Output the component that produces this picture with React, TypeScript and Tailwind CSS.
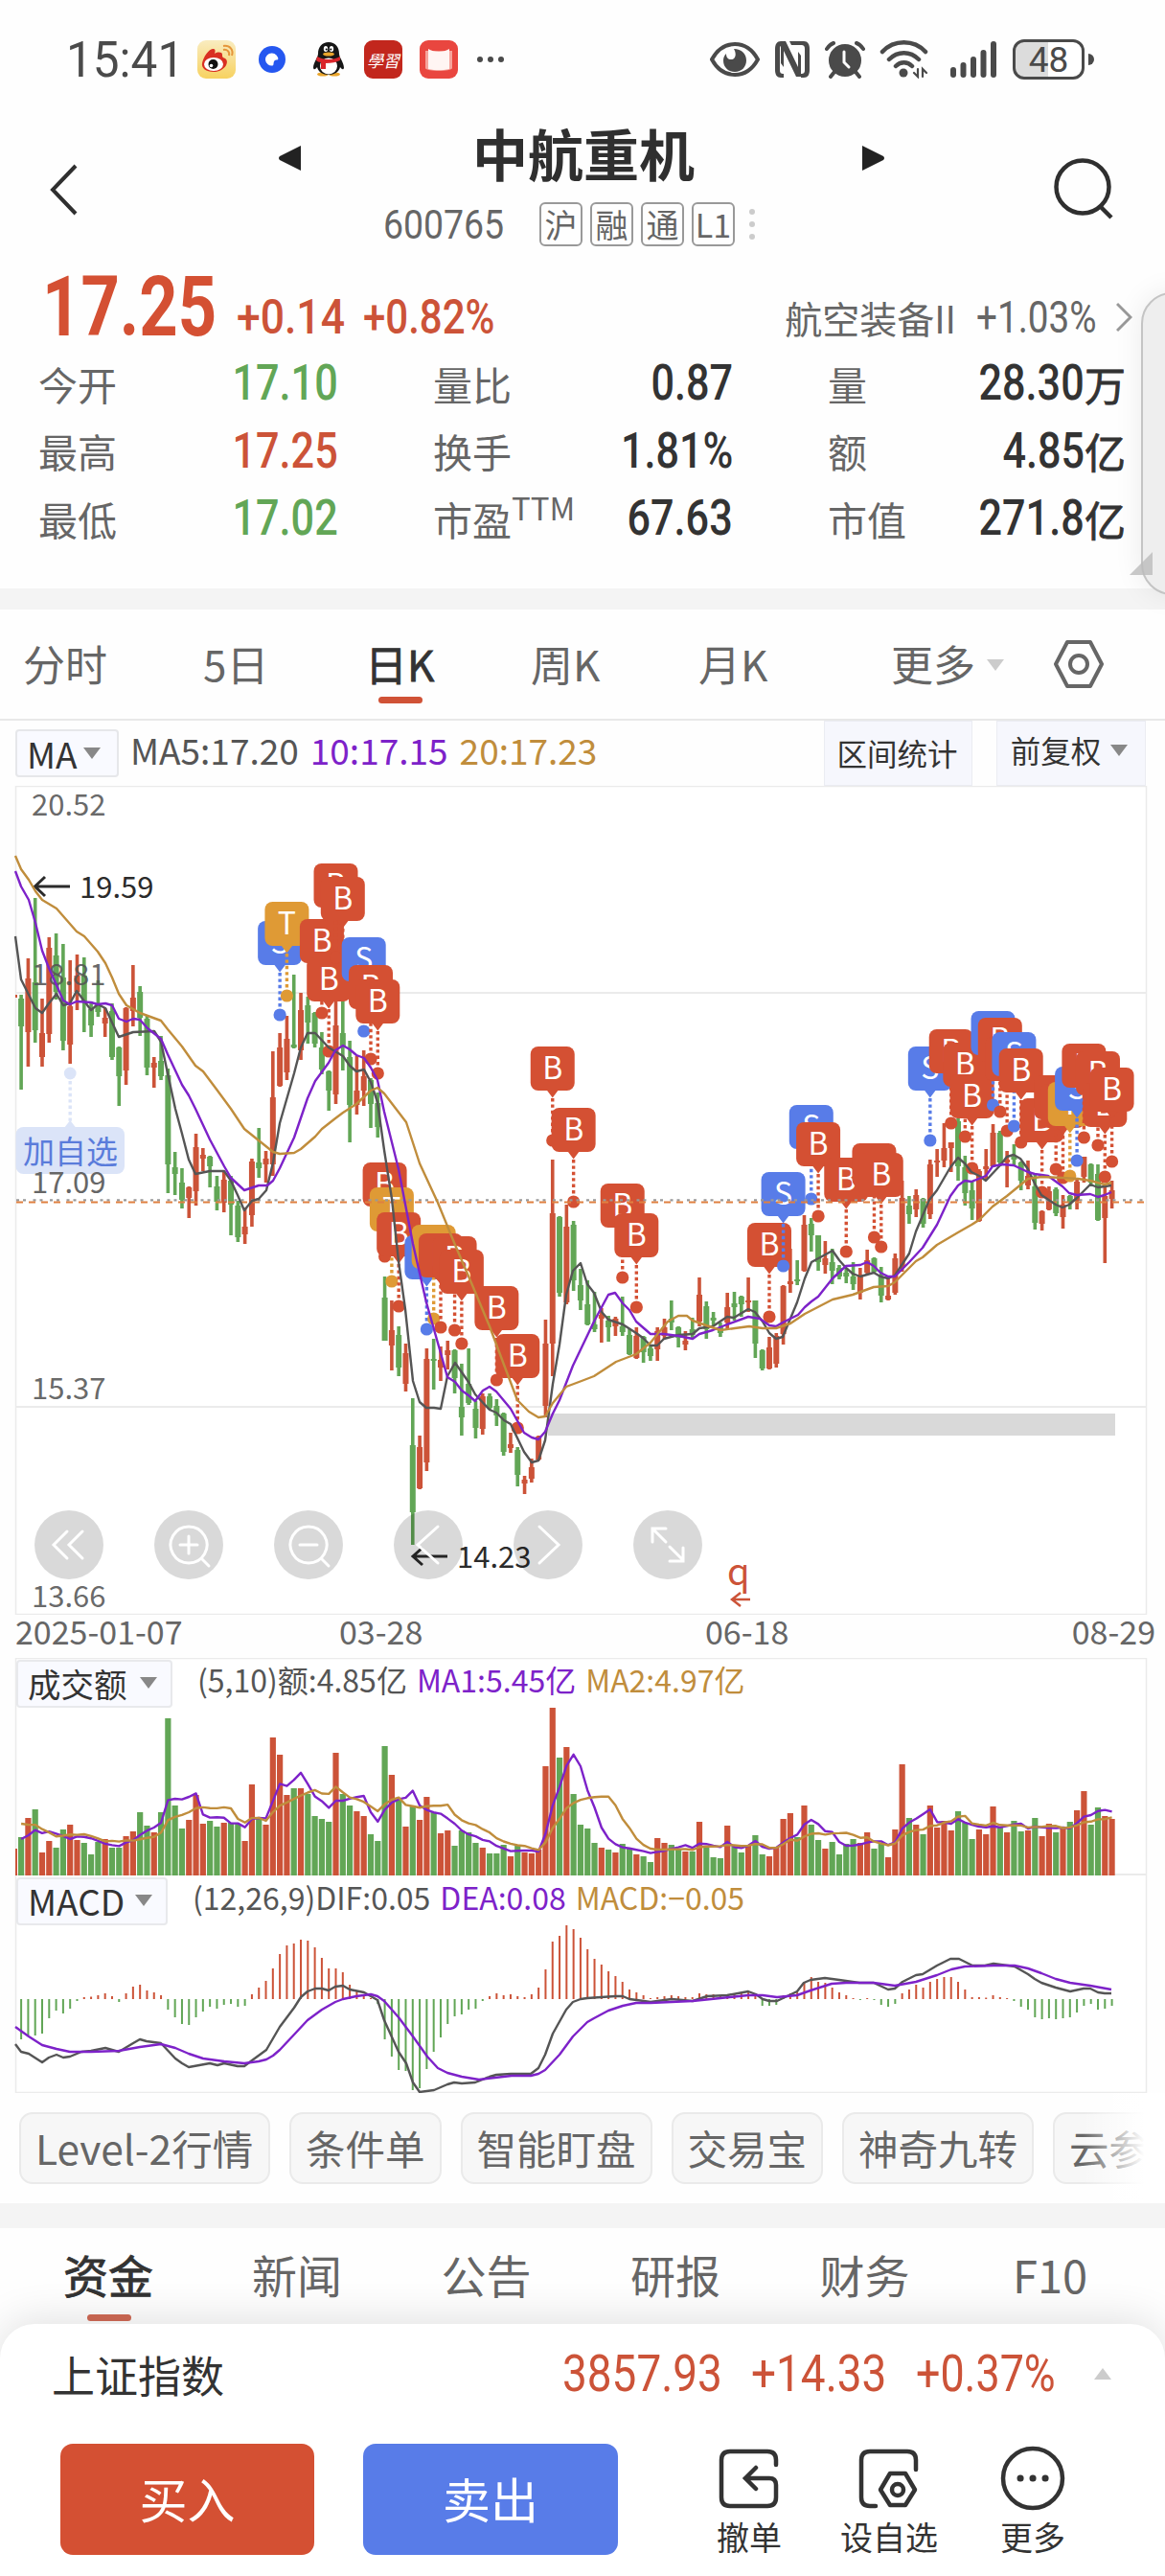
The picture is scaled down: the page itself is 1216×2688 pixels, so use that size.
import type { ReactNode } from 'react';

const RED = '#cc5338';
const GREEN = '#62a656';
const PURPLE = '#7d22c9';
const GOLD = '#c08d3c';
const DARK = '#555555';

const STEP = 7.298;
const FIRST_X = 22.1;
const candleX = (i: number) => FIRST_X + i * STEP;

// direction, high, body top, body bottom, low
const CANDLES = `g218,222,251,317 r180,201,257,293 g117,205,255,268 r222,258,283,293 r158,169,259,268 g154,177,215,223
g165,200,266,276 r182,230,270,290 r176,198,215,234 g179,198,225,257 g225,233,250,262 g203,227,236,241 r232,242,248,262
g227,235,283,286 g272,273,303,334 r231,232,297,312 r187,221,235,251 g209,215,242,261 g240,243,294,302 r283,289,294,315
g261,287,303,307 g295,302,395,425 g382,398,405,427 g399,414,432,441 r418,419,430,451 r363,377,423,438 r378,385,389,402
g386,387,397,419 g407,418,434,443 r403,411,435,445 g407,412,437,469 g433,438,471,476 r440,460,468,478 r389,392,448,460
g357,393,399,409 r381,389,395,414 r277,325,395,407 r258,273,313,314 r240,264,299,307 g197,270,273,274 r216,234,276,286
g220,229,247,269 g236,237,269,273 g257,273,296,301 g297,298,318,339 r223,250,322,332 g213,258,273,297 g266,283,333,372
r282,318,333,343 r276,303,318,334 g305,307,332,357 g320,331,356,367 g512,534,579,579 r537,568,584,610 g564,573,607,616
r582,592,624,632 g639,688,758,792 r678,690,733,734 r587,598,706,715 g577,598,600,630 r585,599,607,621 r579,589,594,609
g588,589,618,634 g603,648,659,678 g587,624,644,646 g642,650,670,681 r634,637,671,677 g634,637,649,651 g640,647,657,668
g654,655,695,699 r675,687,691,696 g690,693,719,731 r720,724,728,739 r702,711,723,727 r678,679,703,704 r557,582,647,659
r390,446,582,616 g449,450,529,533 r437,460,539,541 g454,458,516,527 g504,521,537,547 g516,541,562,563 g528,562,567,570
r545,552,556,581 g553,558,565,580 r554,556,564,574 g533,564,570,574 g567,573,593,594 r565,574,597,598 g574,575,591,602
g584,587,595,600 r565,569,588,600 r556,565,574,577 g537,556,560,568 g564,565,576,586 r569,579,583,589 g555,567,573,577
r513,531,559,564 g538,543,567,577 g549,555,558,564 g560,565,571,575 r529,544,560,566 g528,540,544,558 g532,533,541,554
r513,537,539,549 g537,537,582,597 g588,589,608,610 r575,586,608,609 r571,574,603,607 r521,522,572,583 r483,517,520,529
g495,515,517,521 r448,458,506,507 g451,457,469,486 g469,469,497,506 r475,493,500,509 g483,497,506,520 g500,503,512,515
g503,508,512,519 g497,512,520,526 r503,510,529,536 r484,495,508,510 g492,493,507,508 g502,512,532,539 r512,532,536,537
r488,493,529,531 r412,430,503,507 g428,438,447,457 r421,427,442,450 g430,431,457,461 r390,395,447,452 r379,391,393,408
r352,378,391,398 r372,372,378,403 g347,350,397,412 g386,398,425,438 g412,422,441,453 r400,402,454,455 r379,397,400,410
r353,362,397,398 g360,362,393,397 r381,390,393,419 g374,387,390,397 g392,393,412,422 r391,407,417,421 g405,418,456,463
r443,444,457,464 r418,423,442,443 g419,421,446,449 r427,437,450,462 g427,428,435,442 r410,413,433,442 r387,387,408,414
g394,395,414,418 g395,405,453,454 r417,428,451,498 r412,422,431,441`
  .split(/\s+/)
  .map((entry) => {
    const [high, top, bottom, low] = entry.slice(1).split(',').map(Number);
    return { color: entry[0] === 'r' ? RED : GREEN, high, top, bottom, low };
  });

const MA5 =
  '16,157 22,202 30,218 37,232 44,237 51,227 59,217 66,229 73,227 80,214 95,234 102,228 110,232 124,262 139,257 161,256 168,267 175,300 183,337 190,363 197,390 204,405 219,402 234,402 241,412 248,427 255,443 263,433 270,431 278,422 285,393 292,352 307,300 314,273 321,258 329,258 343,273 358,282 365,292 372,298 380,296 387,309 394,330 401,380 409,431 416,496 423,546 431,621 438,643 445,649 453,649 460,650 467,616 475,602 489,622 496,635 511,651 518,654 526,662 533,666 547,695 555,706 562,704 569,683 577,624 584,583 591,531 598,506 606,498 613,520 620,529 628,549 635,557 650,562 664,571 671,576 679,584 686,584 693,577 708,573 723,572 730,566 744,564 759,554 766,555 781,546 788,549 796,559 803,571 810,577 817,575 832,539 840,514 847,497 869,485 876,495 883,503 890,509 898,512 912,508 919,512 927,514 934,511 949,488 956,465 970,432 978,422 992,398 1000,388 1007,394 1014,403 1022,407 1029,412 1043,397 1051,387 1058,385 1065,389 1073,400 1080,415 1087,427 1102,437 1109,440 1116,437 1124,430 1138,416 1146,419 1160,417';
const MA10 =
  '16,89 22,105 30,119 37,143 44,172 51,190 59,208 66,224 73,228 80,225 95,226 102,228 110,227 117,229 124,243 132,246 139,243 146,244 154,253 168,264 175,280 190,312 197,323 204,337 219,369 234,397 241,409 255,422 270,417 279,417 285,412 292,399 307,367 321,326 329,308 343,289 350,276 358,271 365,275 372,281 380,284 387,294 394,307 401,340 416,400 431,478 445,539 460,592 467,617 475,622 482,631 489,636 496,642 504,631 511,627 518,632 533,650 547,675 555,680 562,682 569,674 577,655 584,641 598,605 620,559 628,544 635,531 642,529 650,540 657,547 664,559 679,572 693,572 708,574 723,577 730,572 744,568 759,562 781,554 793,556 803,563 810,564 817,560 833,552 840,544 847,538 854,533 869,514 883,501 898,500 905,497 912,501 919,508 927,512 934,512 949,497 963,482 978,458 985,443 992,428 1000,417 1007,412 1014,413 1029,407 1036,397 1046,395 1058,396 1073,403 1080,405 1094,407 1109,418 1116,425 1124,427 1138,426 1146,429 1153,427 1160,424';
const MA20 =
  '16,73 22,87 30,98 37,110 44,119 59,128 80,152 88,157 102,173 110,185 117,200 124,217 132,229 146,237 168,245 175,254 190,272 204,292 212,298 227,318 241,337 255,358 270,370 285,382 292,384 307,383 314,379 329,366 336,358 350,347 358,341 372,332 387,318 394,315 401,321 424,351 438,394 457,435 475,479 493,521 511,564 526,604 540,641 552,653 562,659 569,658 577,644 591,627 607,621 620,616 643,601 664,593 679,581 697,559 708,553 717,553 723,558 737,563 752,568 767,566 782,564 796,566 810,566 825,561 840,551 869,536 890,531 912,523 927,522 934,518 956,496 963,492 978,479 1000,466 1014,458 1022,453 1036,439 1051,428 1073,410 1087,408 1109,409 1125,410 1138,412 1153,416 1160,414';

type MarkerKind = 'B' | 'S' | 'T';
const MARKER_COLORS: Record<MarkerKind, string> = { B: '#d45033', S: '#587ce8', T: '#df9a35' };

const MARKERS: [MarkerKind, number, number][] = [
  ['S', 37, 141], ['T', 38, 121], ['B', 43, 139], ['B', 44, 179], ['B', 45, 81], ['B', 46, 95],
  ['S', 49, 158], ['B', 50, 187], ['B', 51, 202], ['B', 52, 393], ['T', 53, 419], ['B', 54, 445],
  ['S', 58, 469], ['T', 59, 458], ['B', 60, 467], ['B', 62, 470], ['B', 63, 484], ['B', 68, 522],
  ['B', 71, 572], ['B', 76, 272], ['B', 79, 336], ['B', 86, 415], ['B', 88, 446], ['B', 107, 456],
  ['S', 109, 403], ['S', 113, 333], ['B', 114, 351], ['B', 118, 388], ['B', 122, 373], ['B', 123, 383],
  ['S', 130, 272], ['B', 133, 254], ['B', 135, 268], ['B', 136, 301], ['S', 139, 235], ['B', 140, 242],
  ['B', 141, 262], ['S', 142, 257], ['B', 143, 274], ['B', 146, 326], ['B', 148, 302], ['B', 149, 311],
  ['T', 150, 309], ['S', 151, 293], ['B', 152, 269], ['B', 154, 277], ['B', 155, 310], ['B', 156, 294],
];

const VOLUMES = [
  40, 60, 69, 24, 36, 29, 48, 53, 37, 34, 22, 35, 38, 29, 29, 41, 46, 66, 52, 45, 66, 164, 73, 49, 58, 84, 54, 57, 51,
  55, 55, 54, 36, 95, 60, 53, 144, 126, 84, 91, 91, 85, 62, 59, 56, 128, 85, 73, 67, 62, 43, 36, 135, 105, 79, 51, 72,
  58, 82, 66, 44, 47, 31, 47, 45, 34, 29, 23, 23, 32, 20, 31, 24, 23, 27, 114, 175, 123, 134, 85, 53, 49, 34, 29, 27,
  24, 33, 28, 22, 20, 14, 39, 34, 32, 28, 25, 25, 56, 30, 19, 18, 52, 30, 24, 32, 42, 22, 20, 29, 59, 65, 40, 73, 53,
  37, 28, 35, 22, 33, 38, 34, 45, 28, 33, 19, 48, 116, 60, 53, 43, 73, 50, 57, 47, 67, 55, 38, 48, 43, 72, 50, 45, 57,
  46, 47, 60, 41, 54, 45, 50, 56, 68, 88, 53, 71, 62, 59,
];
// sessions before the visible window, only needed for the averages
const EARLIER_VOLUMES = [70, 70, 70, 70, 70, 41, 41, 40, 28];

const HISTOGRAM = [
  -42, -38, -38, -36, -20, -12, -15, -10, -2, 2, 2.5, 4, 6, 3, -3, 6, 13, 15, 9, 7, 4, -11, -19, -26, -27, -19, -13, -8,
  -10, -6, -5, -8, -7, 5, 12, 19, 32, 47, 56, 58, 62, 61, 54, 43, 32, 32, 28, 15, 8, 5, 1, -5, -42, -60, -74, -75, -95,
  -93, -73, -55, -40, -26, -18, -16, -11, -10, -2, 3, 6, 4, 5, 3, 2, 5, 12, 31, 60, 66, 77, 73, 64, 52, 42, 36, 29, 24,
  18, 10, 7, 4, 1, 2, 3, 4, 3, 2, 2, 6, 5, 5, 4, 4, 5, 6, 7, 3, -7, -7, -6, 4, 6, 7, 18, 23, 18, 17, 12, 7, 4, 1, -1, 1,
  -1, -6, -8, -5, 6, 10, 15, 12, 18, 21, 23, 23, 18, 10, 2, 2, 1.5, 4, 2, 1, -2, -8, -11, -19, -21, -20, -21, -20, -19,
  -14, -7, -5, -11, -10, -7,
];

const DIF =
  '16,176 22,184 30,186 44,195 51,190 59,187 66,190 73,189 85,184 95,183 110,180 124,184 139,175 146,171 153,173 168,175 183,191 190,196 197,200 219,196 227,198 234,196 248,199 255,199 263,193 278,182 292,158 307,138 314,127 321,121 329,118 336,118 343,120 350,116 358,115 365,119 380,122 394,130 401,151 416,184 424,196 431,216 438,226 453,224 467,218 474,216 482,217 496,216 511,210 518,208 533,207 554,207 562,201 569,187 577,165 591,140 598,132 606,129 613,128 642,126 650,126 657,129 672,131 679,132 701,129 723,131 738,126 759,125 781,121 789,124 796,129 803,131 811,131 832,121 839,112 846,109 861,107 876,109 897,112 912,112 927,119 934,118 942,111 956,104 963,103 978,94 992,87 1001,87 1007,90 1015,94 1028,94 1037,92 1052,94 1059,95 1073,103 1080,108 1087,112 1102,117 1117,121 1131,118 1138,118 1146,122 1153,123 1160,123';
const DEA =
  '16,158 30,168 44,177 59,181 73,184 95,184 124,183 146,179 168,176 183,180 197,186 212,191 234,194 255,196 270,194 278,192 285,188 292,182 307,166 321,151 336,140 350,132 358,129 372,126 387,124 394,126 401,131 416,148 431,168 446,189 457,201 467,206 482,210 500,213 534,209 554,209 562,207 569,203 584,187 598,168 613,153 620,149 635,141 650,136 664,133 679,133 723,131 752,128 781,125 796,125 811,127 832,125 846,120 868,113 883,112 912,112 934,115 956,111 978,104 993,98 1007,95 1037,94 1059,94 1073,97 1087,102 1102,108 1117,112 1138,115 1160,119';

function average(period: number) {
  const all = [...EARLIER_VOLUMES, ...VOLUMES];
  return VOLUMES.map((_, i) => {
    const end = i + EARLIER_VOLUMES.length + 1;
    const sum = all.slice(end - period, end).reduce((a, b) => a + b, 0);
    return `${candleX(i)},${227 - sum / period}`;
  }).join(' ');
}

function Line({ points, color }: { points: string; color: string }) {
  return <polyline points={points} fill="none" stroke={color} strokeWidth="2.4" strokeLinejoin="round" />;
}

function Marker({ kind, index, top }: { kind: MarkerKind; index: number; top: number }) {
  const x = candleX(index);
  const color = MARKER_COLORS[kind];
  return (
    <g fill={color}>
      <line x1={x} x2={x} y1={top + 54} y2={top + 92} stroke={color} strokeWidth="3.4" strokeDasharray="3.4 3" />
      <circle cx={x} cy={top + 98} r="6.6" />
      <rect x={x - 23} y={top} width="46" height="46" rx="8" />
      <path d={`M${x - 6} ${top + 45.5}h12l-6 8z`} />
      <text x={x} y={top + 34} textAnchor="middle" fontSize="32" fill="#fff">
        {kind}
      </text>
    </g>
  );
}

function PriceChart() {
  return (
    <svg width="1216" height="865" className="block">
      <rect x="16.5" y="0.5" width="1180" height="864" fill="#fff" stroke="#ebebeb" strokeWidth="1.5" />
      <path d="M17 216h1179M17 648h1179" stroke="#ebebeb" strokeWidth="2" />
      <rect x="16" y="218" width="2" height="3" fill={RED} />
      {CANDLES.map((c, i) => (
        <g key={i} fill={c.color}>
          <rect x={candleX(i) - 1.8} y={c.high} width="3.6" height={c.low - c.high} />
          <rect x={candleX(i) - 3} y={c.top} width="6" height={Math.max(c.bottom - c.top, 2)} />
        </g>
      ))}
      <rect x="572" y="655" width="592" height="23" fill="#d9d9d9" />
      <g fontSize="31" fill="#555" fillOpacity="0.9">
        <text x="33" y="31">20.52</text>
        <text x="33" y="208">18.81</text>
        <text x="33" y="640">15.37</text>
        <text x="33" y="857">13.66</text>
      </g>

      {/* Watchlist flag */}
      <circle cx="73.2" cy="300" r="6.4" fill="#dbe4f8" />
      <path d="M73.2 308v42" stroke="#dbe4f8" strokeWidth="3.4" strokeDasharray="3.4 3" />
      <path d="M67 357l6.2-8 6.2 8z" fill="#dbe4f8" />
      <rect x="16.5" y="356" width="113.5" height="49" rx="8" fill="#dbe4f8" />
      <text x="24" y="394" fontSize="33" fill="#5a7cdb">加自选</text>
      <text x="33" y="425" fontSize="31" fill="#666">17.09</text>

      <g fill="none" stroke="#2b2b2b" strokeWidth="3">
        <path d="M73 105H37M47 95l-10.500 10 10.500 10" />
        <path d="M467 804h-36M441 795l-10 9 10 9" />
      </g>
      <g fontSize="31" fill="#2b2b2b">
        <text x="83" y="117">19.59</text>
        <text x="477" y="816">14.23</text>
      </g>

      {MARKERS.map(([kind, index, top]) => (
        <Marker key={index} kind={kind} index={index} top={top} />
      ))}

      <path d="M17 432.400h1179" stroke="#999" strokeWidth="2.400" strokeDasharray="3 4 3 7.500" />
      <path d="M17 434.400h1179" stroke="#e08040" strokeWidth="2" strokeDasharray="7 6" />
      <Line points={MA5} color={DARK} />
      <Line points={MA10} color={PURPLE} />
      <Line points={MA20} color={GOLD} />

      <text x="759" y="834" fontSize="38" fill={RED}>q</text>
      <path d="M783 849h-18M773 842l-9 7 9 7" fill="none" stroke={RED} strokeWidth="2.500" />
    </svg>
  );
}

function VolumeChart() {
  return (
    <svg width="1216" height="227" className="block">
      <path d="M16.500 227V0.500H1196.500V227" fill="#fff" stroke="#ebebeb" strokeWidth="1.5" />
      <path d="M17 226h1179" stroke="#ebebeb" strokeWidth="2" />
      <rect x="16" y="199" width="2" height="28" fill={RED} />
      {VOLUMES.map((v, i) => (
        <rect key={i} x={candleX(i) - 3.1} y={227 - v} width="6.2" height={v} fill={CANDLES[i].color} />
      ))}
      <Line points={average(5)} color={PURPLE} />
      <Line points={average(10)} color={GOLD} />
    </svg>
  );
}

function MacdChart() {
  return (
    <svg width="1216" height="227" className="block">
      <path d="M16.500 0V226.500H1196.500V0" fill="#fff" stroke="#ebebeb" strokeWidth="1.5" />
      {HISTOGRAM.map((v, i) => (
        <rect
          key={i}
          x={candleX(i) - 1}
          y={v > 0 ? 129 - v : 129}
          width="2"
          height={Math.abs(v)}
          fill={v > 0 ? RED : GREEN}
        />
      ))}
      <Line points={DIF} color={DARK} />
      <Line points={DEA} color={PURPLE} />
    </svg>
  );
}

function Caret({ className, up }: { className: string; up?: boolean }) {
  return (
    <svg viewBox="0 0 18 12" className={`h-3 w-[18px] shrink-0 fill-current ${className}`}>
      <path d={up ? 'M0 12h18L9 0z' : 'M0 0h18L9 12z'} />
    </svg>
  );
}

function StatusBar() {
  return (
    <div className="flex h-[120px] items-center pb-px pl-[69px] pr-[74px] pt-[5px] text-[#4a4a4a]">
      <div className="w-[137px] font-[Roboto] text-[51px] leading-none whitespace-nowrap">
        <span className="inline-block origin-left scale-x-[.97]">15:41</span>
      </div>
      <svg width="40" height="40" viewBox="0 0 40 40">
        <defs>
          <linearGradient id="weibo" x2="0" y2="1">
            <stop stopColor="#f9ecc0" />
            <stop offset="1" stopColor="#f7d260" />
          </linearGradient>
        </defs>
        <rect width="40" height="40" rx="9" fill="url(#weibo)" />
        <path d="M16 9c3 0 3 2 2 5 3-2 8-2 8 1 0 2 0 3 3 4 5 3 0 14-12 14C9 33 4 29 5 24 6 18 12 9 16 9z" fill="#d92f22" />
        <ellipse cx="17" cy="25" rx="10" ry="7" fill="#fff" />
        <circle cx="16.500" cy="25" r="5" fill="#111" />
        <circle cx="14.500" cy="26.500" r="1.800" fill="#fff" />
        <path d="M27 10c4-1 7 2 6 6M27 6c7-1 11 4 9 10" fill="none" stroke="#e5963a" strokeWidth="2" />
      </svg>
      <svg width="28" height="28" viewBox="0 0 28 28" className="ml-6">
        <circle cx="14" cy="14" r="14" fill="#2557f0" />
        <path d="M14 7.500a6.500 6.500 0 1 0 1 12.800c1-1 0-4 2-5.300 1.500-.8 3-.5 3.300-1A6.500 6.500 0 0 0 14 7.500z" fill="#fff" />
      </svg>
      <svg width="32" height="36" viewBox="0 0 32 36" className="ml-[29px]">
        <ellipse cx="10" cy="33.500" rx="6" ry="2" fill="#e9a52c" />
        <ellipse cx="22" cy="33.500" rx="6" ry="2" fill="#e9a52c" />
        <path d="M16 0c7 0 11 5 11 12 0 4 5 9 5 15-1 3-3 0-4-1-1 5-6 8-12 8S5 31 4 26c-1 1-3 4-4 1 0-6 5-11 5-15C5 5 9 0 16 0z" fill="#161616" />
        <ellipse cx="16" cy="25" rx="9" ry="8.500" fill="#fff" />
        <ellipse cx="13" cy="7" rx="2.200" ry="3" fill="#fff" />
        <ellipse cx="19" cy="7" rx="2.200" ry="3" fill="#fff" />
        <circle cx="13.700" cy="7.500" r="1" />
        <circle cx="18.300" cy="7.500" r="1" />
        <ellipse cx="16" cy="12.500" rx="6" ry="2" fill="#e9a52c" />
        <path d="M4 15c7 4 17 4 24 0v4c-4 2-9 3-15 3v6H8v-7c-2 0-4-1-5-2z" fill="#d9252b" />
      </svg>
      <div className="ml-[21px] flex h-10 w-10 items-center justify-center rounded-[9px] bg-[#c2271d] text-[17px] leading-none text-white italic">
        學習
      </div>
      <svg width="40" height="40" viewBox="0 0 40 40" className="ml-[18px]">
        <rect width="40" height="40" rx="9" fill="#e9463f" />
        <path d="M6 11h28v18c0 2-8 3-14 3S6 31 6 29z" fill="#f6a49c" />
        <path d="M9 9c3 2 7 3 11 3s8-1 11-3v21c-4 1-8 1-11 1s-7 0-11-1z" fill="#fff5f3" />
      </svg>
      <div className="ml-[20px] flex gap-[5px]">
        <i className="h-1.5 w-1.5 rounded-full bg-current" />
        <i className="h-1.5 w-1.5 rounded-full bg-current" />
        <i className="h-1.5 w-1.5 rounded-full bg-current" />
      </div>

      <div className="ml-auto flex items-center">
        <svg width="52" height="38" viewBox="0 0 52 38" className="fill-none stroke-current" strokeWidth="4">
          <path d="M2 19C8 8 16 3 26 3s18 5 24 16C44 30 36 35 26 35S8 30 2 19z" />
          <path d="M25 8c8 0 13 5 13 12s-5 12-12 12-12-5-12-12c0-3 1-5 3-7 0 4 2 6 5 6 5 0 6-6 3-11z" className="fill-current stroke-none" />
        </svg>
        {/* NFC */}
        <svg width="36" height="38" viewBox="0 0 36 38" className="ml-4 fill-current">
          <path d="M6 0h5l13 27V11l3 4v22h-5L9 10v17l-3-4z" />
          <path d="M6 0C2 0 0 3 0 8v22c0 5 2 8 6 8h3V34c-3 0-4-1-4-4V8c0-3 1-4 4-4z" />
          <path d="M15 0h15c4 0 6 3 6 8v22c0 5-2 8-6 8h-3v-4c3 0 4-1 4-4V8c0-3-1-4-4-4H17z" />
        </svg>
        <svg width="42" height="40" viewBox="0 0 42 40" className="ml-4 stroke-current" strokeWidth="4" strokeLinecap="round">
          <circle cx="21" cy="21" r="15" className="fill-current" />
          <path d="M2 9c2-3 4-5 7-6M40 9c-2-3-4-5-7-6M10 33l-4 5M32 33l4 5" fill="none" />
          <path d="M20 12v11l5 5" fill="none" stroke="#fff" strokeWidth="3" />
        </svg>
        <svg width="52" height="40" viewBox="0 0 52 40" className="ml-[15px] fill-none stroke-current" strokeWidth="4.500" strokeLinecap="round">
          <path d="M3 12C15-1 36-1 48 12M10 20c9-9 22-9 31 0M17 27c5-5 12-5 17 0" />
          <circle cx="25" cy="34" r="4.500" className="fill-current stroke-none" />
          <path d="M40 30v8l-4-4M45 38v-8l4 4" strokeWidth="2.200" />
        </svg>
        <svg width="50" height="40" viewBox="0 0 50 40" className="ml-[21px] stroke-current" strokeWidth="6" strokeLinecap="round">
          <path d="M4 31v5M14.500 26v10M25 20v16M35.500 13v23M46 4v32" />
        </svg>
        <div className="ml-4 flex h-[42px] w-[75px] items-center justify-center rounded-xl border-[3px] border-[#4a4a4a] bg-[linear-gradient(90deg,#dcdcdc_50%,#fff_50%)] font-[Roboto] text-[37px] leading-none">
          48
        </div>
        <i className="ml-1 h-3 w-1.5 rounded-r-full bg-current" />
      </div>
    </div>
  );
}

function StockHeader() {
  return (
    <header className="flex h-[155px] justify-between pl-[52px] pr-[54px] text-[#2f2f2f]">
      <svg width="30" height="54" viewBox="0 0 30 54" className="mt-[51px] fill-none stroke-current" strokeWidth="4">
        <path d="M27 2L3 27l24 25" />
      </svg>
      <div className="flex flex-col items-center pl-1.5">
        <div className="relative left-[13px] mt-2 flex items-center">
          <svg width="23" height="28" viewBox="0 0 23 28" className="mt-3">
            <path d="M23 1v26L1 16q-2-2 0-4z" fill="#222" />
          </svg>
          <h1 className="mr-[175px] ml-[179px] text-[58px] leading-[62px] font-bold">中航重机</h1>
          <svg width="23" height="28" viewBox="0 0 23 28" className="mt-3">
            <path d="M0 1v26l22-11q2-2 0-4z" fill="#222" />
          </svg>
        </div>
        <div className="mt-[21px] flex items-center text-[#666]">
          <div className="w-[163px] font-[Roboto] text-[43px] leading-none whitespace-nowrap">
            <span className="inline-block origin-left scale-x-[.87]">600765</span>
          </div>
          <div className="flex gap-2">
            {['沪', '融', '通', 'L1'].map((tag) => (
              <span
                key={tag}
                className="flex h-[46px] w-[45px] items-center justify-center rounded-md border-2 border-[#999] text-[34px] leading-none"
              >
                {tag}
              </span>
            ))}
          </div>
          <div className="ml-[15px] flex flex-col gap-[7px]">
            <i className="h-1.5 w-1.5 rounded-full bg-[#ccc]" />
            <i className="h-1.5 w-1.5 rounded-full bg-[#ccc]" />
            <i className="h-1.5 w-1.5 rounded-full bg-[#ccc]" />
          </div>
        </div>
      </div>
      <svg width="62" height="64" viewBox="0 0 62 64" className="mt-[45px] fill-none stroke-current" strokeWidth="4.500">
        <circle cx="30" cy="30" r="27.500" />
        <path d="M48 50l12 12" />
      </svg>
    </header>
  );
}

interface StatProps {
  label: ReactNode;
  value: string;
  unit?: string;
  className: string;
  color: string;
}

function Stat({ label, value, unit, className, color }: StatProps) {
  return (
    <div className={`flex items-center justify-between ${className}`}>
      <span className="text-[41px] leading-none whitespace-nowrap text-[#666]">{label}</span>
      <span className={`flex items-center font-[Roboto] text-[52px] leading-none font-medium ${color}`}>
        <span className="w-28 text-right">
          <span className="float-right inline-block origin-right scale-x-[.83]">{value}</span>
        </span>
        {unit && (
          <span className="font-['Noto_Sans_CJK_SC'] text-[43px] font-normal [-webkit-text-stroke:.8px]">{unit}</span>
        )}
      </span>
    </div>
  );
}

const STATS = [
  [
    { label: '今开', value: '17.10', color: 'text-[#62a656]' },
    { label: '量比', value: '0.87', color: 'text-[#333]' },
    { label: '量', value: '28.30', unit: '万', color: 'text-[#333]' },
  ],
  [
    { label: '最高', value: '17.25', color: 'text-[#cc5338]' },
    { label: '换手', value: '1.81%', color: 'text-[#333]' },
    { label: '额', value: '4.85', unit: '亿', color: 'text-[#333]' },
  ],
  [
    { label: '最低', value: '17.02', color: 'text-[#62a656]' },
    { label: '市盈', sup: 'TTM', value: '67.63', color: 'text-[#333]' },
    { label: '市值', value: '271.8', unit: '亿', color: 'text-[#333]' },
  ],
];
const STAT_WIDTHS = ['w-[313px]', 'ml-[99px] w-[313px]', 'ml-[99px] w-[311px]'];

function Quote() {
  return (
    <section className="relative h-[339px] pl-10">
      <div className="flex h-[90px] items-end pb-[9px] font-[Roboto] leading-none whitespace-nowrap text-[#cc5338]">
        <div className="-mb-2 w-[207px] pl-[4px] text-[87px] font-bold text-[#d45033]">
          <span className="inline-block origin-left scale-x-[.81]">17.25</span>
        </div>
        <div className="w-[132px] text-[50px] font-medium">
          <span className="inline-block origin-left scale-x-[.89]">+0.14</span>
        </div>
        <div className="w-[140px] text-[50px] font-medium">
          <span className="inline-block origin-left scale-x-[.84]">+0.82%</span>
        </div>
        <div className="mb-0.5 ml-auto flex items-center text-[#666]">
          <span className="font-['Noto_Sans_CJK_SC'] text-[39px]">航空装备II</span>
          <span className="ml-[21px] w-[126px] text-[46px]">
            <span className="inline-block origin-left scale-x-[.84]">+1.03%</span>
          </span>
          <svg width="17" height="32" viewBox="0 0 17 32" className="mr-[34px] ml-5 fill-none stroke-[#999]" strokeWidth="3">
            <path d="M1 2l14 14L1 30" />
          </svg>
        </div>
      </div>
      {STATS.map((row, r) => (
        <div key={r} className="flex h-[70.500px]">
          {row.map(({ label, sup, ...rest }: any, c) => (
            <Stat
              key={label}
              {...rest}
              className={STAT_WIDTHS[c]}
              label={
                sup ? (
                  <>
                    {label}
                    <span className="relative -top-4 text-[33px]">{sup}</span>
                  </>
                ) : (
                  label
                )
              }
            />
          ))}
        </div>
      ))}
      {/* Collapsed side drawer peeking in from the right */}
      <div className="absolute top-[30px] right-[-40px] h-[316px] w-[65px] rounded-[44px] border-2 border-[#c4c4c4] bg-[#eee] shadow-[0_0_30px_rgba(0,0,0,.08)]" />
      <svg width="37" height="30" viewBox="0 0 37 30" className="absolute top-[300px] right-0">
        <path d="M0 25L24 1v24z" fill="#bbb" fillOpacity="0.8" />
      </svg>
    </section>
  );
}

function PeriodTabs() {
  return (
    <nav className="flex h-[116px] border-b-2 border-[#e8e8e8] pl-6 pt-[34px] text-[44px] leading-[44px] text-[#666]">
      <span className="w-[188px]">分时</span>
      <span className="w-[169px]">5日</span>
      <span className="w-[173px] text-[#333] [-webkit-text-stroke:.8px]">
        日K
        <i className="mt-[13px] ml-3.5 block h-[7px] w-[46px] rounded-full bg-[#d05236]" />
      </span>
      <span className="w-[175px]">周K</span>
      <span className="w-[201px]">月K</span>
      <span>更多</span>
      <Caret className="mt-[18px] ml-3 text-[#ccc]" />
      <svg width="52" height="50" viewBox="0 0 52 50" className="-mt-0.5 ml-[52px] fill-none stroke-[#666]" strokeWidth="4">
        <path d="M14 2h24l12 23-12 23H14L2 25z" strokeLinejoin="round" />
        <circle cx="26" cy="25" r="9" />
      </svg>
    </nav>
  );
}

function IndicatorBar() {
  return (
    <div className="flex h-[68px] pl-4 text-[37px] leading-none">
      <div className="mt-[9px] flex h-[50px] w-[108px] items-center rounded border-2 border-[#e6e7ea] bg-[#f9faff] pl-2.5 text-[#333]">
        MA
        <Caret className="ml-1.5 text-[#888]" />
      </div>
      <div className="mt-[12px] ml-3 flex w-[724px] gap-[12px] whitespace-nowrap">
        <span className="text-[#555]">MA5:17.20</span>
        <span className="text-[#7d22c9]">10:17.15</span>
        <span className="text-[#c08d3c]">20:17.23</span>
      </div>
      <div className="flex w-[155px] items-center justify-center border border-[#ebecf2] bg-[#f6f7fd] pr-0.5 text-[31.500px] text-[#333]">
        区间统计
      </div>
      <div className="ml-[25px] flex w-[156px] items-center justify-center border border-[#ebecf2] bg-[#f6f7fd] pr-1 pb-1.5 text-[31.500px] text-[#333]">
        前复权
        <Caret className="ml-2.5 text-[#888]" />
      </div>
    </div>
  );
}

const CHART_BUTTONS = [
  'M34 22L20 36l14 14M50 22L36 36l14 14',
  'M36 17a19 19 0 1 0 .1 0zM49 50l8 8M36 27v18M27 36h18',
  'M36 17a19 19 0 1 0 .1 0zM49 50l8 8M27 36h18',
  'M46 17L25 36l21 19',
  'M27 17l20 19-20 19',
  'M20 33V19h14M20 19l14 14M38 38l14 14M38 53h14V39',
];

function ChartButtons() {
  return (
    <div className="absolute bottom-[37px] left-9 flex gap-[53px]">
      {CHART_BUTTONS.map((d) => (
        <svg
          key={d}
          width="72"
          height="72"
          viewBox="0 0 72 72"
          className="rounded-full bg-black/15 fill-none stroke-white"
          strokeWidth="3"
          strokeLinecap="round"
        >
          <path d={d} />
        </svg>
      ))}
    </div>
  );
}

function PanelHeader({ name, nameClass, children }: { name: string; nameClass: string; children: ReactNode }) {
  return (
    <div className="absolute top-0.5 left-[17px] flex text-[32px] leading-none whitespace-nowrap">
      <div
        className={`flex h-[50px] items-center justify-between rounded border-2 border-[#e8e9ec] bg-[#f9faff] pb-0.5 pl-2.5 pr-3.5 text-[#333] ${nameClass}`}
      >
        {name}
        <Caret className="text-[#888]" />
      </div>
      <div className="mt-1 ml-[26px] flex gap-2.5 text-[#555]">{children}</div>
    </div>
  );
}

function Charts() {
  return (
    <>
      <div className="relative">
        <PriceChart />
        <ChartButtons />
      </div>
      <div className="flex h-[45px] items-center pr-2.5 pb-3 pl-4 text-[34px] leading-none text-[#666]">
        <span className="w-[338px]">2025-01-07</span>
        <span className="w-[382px]">03-28</span>
        <span>06-18</span>
        <span className="ml-auto">08-29</span>
      </div>
      <div className="relative">
        <VolumeChart />
        <PanelHeader name="成交额" nameClass="w-[163px] text-[34.500px]">
          <span>(5,10)额:4.85亿</span>
          <span className="text-[#7d22c9]">MA1:5.45亿</span>
          <span className="text-[#c08d3c]">MA2:4.97亿</span>
        </PanelHeader>
      </div>
      <div className="relative">
        <MacdChart />
        <PanelHeader name="MACD" nameClass="w-[158px] text-[37px]">
          <span>(12,26,9)DIF:0.05</span>
          <span className="text-[#7d22c9]">DEA:0.08</span>
          <span className="text-[#c08d3c]">MACD:−0.05</span>
        </PanelHeader>
      </div>
    </>
  );
}

function Shortcuts() {
  return (
    <div className="relative h-[115px] overflow-hidden">
      <div className="flex gap-5 pt-5 pl-5">
        {['Level-2行情', '条件单', '智能盯盘', '交易宝', '神奇九转', '云参'].map((item) => (
          <span
            key={item}
            className="flex h-[75px] shrink-0 items-center rounded-[14px] border-2 border-[#eaeaea] bg-[#f7f7f7] px-[15px] text-[41.500px] leading-none text-[#666] first:w-[262px] first:text-[42.500px]"
          >
            {item}
          </span>
        ))}
      </div>
      <div className="absolute inset-y-0 right-0 w-[86px] bg-linear-to-r from-white/0 to-white to-75%" />
    </div>
  );
}

function InfoTabs() {
  return (
    <nav className="flex h-[100px] pl-[66px] pt-[24px] text-[47px] leading-[48px] text-[#666]">
      <span className="w-[197px] text-[#333] [-webkit-text-stroke:.8px]">
        资金
        <i className="mt-[18px] ml-[25px] block h-[7px] w-[46px] rounded-sm bg-[#d06a55]" />
      </span>
      {['新闻', '公告', '研报', '财务'].map((tab) => (
        <span key={tab} className="w-[197.500px]">
          {tab}
        </span>
      ))}
      <span className="pl-1">F10</span>
    </nav>
  );
}

function Action({ label, className, children }: { label: string; className: string; children: ReactNode }) {
  return (
    <div className={`flex flex-col items-center text-[34px] leading-none whitespace-nowrap text-[#333] ${className}`}>
      <svg width="68" height="68" viewBox="0 0 68 68" className="mt-0.5 mb-2.5 fill-none stroke-current" strokeWidth="4.500" strokeLinecap="round">
        {children}
      </svg>
      {label}
    </div>
  );
}

function BottomSheet() {
  return (
    <footer className="relative h-[263px] rounded-t-[36px] bg-white shadow-[0_-4px_44px_rgba(0,0,0,.12)]">
      <div className="flex h-[104px] items-center pr-[54px] pl-[54px] whitespace-nowrap text-[#cc5338]">
        <span className="text-[45px] leading-none text-[#333]">上证指数</span>
        <div className="ml-auto flex font-[Roboto] text-[54px] leading-none">
          <span className="w-[197px]">
            <span className="inline-block origin-left scale-x-[.85]">3857.93</span>
          </span>
          <span className="w-[172px]">
            <span className="inline-block origin-left scale-x-[.85]">+14.33</span>
          </span>
          <span className="w-[184px]">
            <span className="inline-block origin-left scale-x-[.83]">+0.37%</span>
          </span>
        </div>
        <Caret up className="w-[22px] text-[#ccc]" />
      </div>
      <div className="flex pt-[21px] pl-[63px]">
        <button className="h-[116px] w-[265px] rounded-[13px] bg-[#d45033] pb-1 text-[50px] leading-none text-white">
          买入
        </button>
        <button className="ml-[51px] h-[116px] w-[266px] rounded-[13px] bg-[#587ce8] pb-1 text-[50px] leading-none text-white">
          卖出
        </button>
        <Action label="撤单" className="ml-[82px] w-[110px]">
          <path d="M62 20v-5q0-9-9-9H14q-9 0-9 9v39q0 9 9 9h39q9 0 9-9V41q0-7-7-7H30M41 23L30 34l11 11" />
        </Action>
        <Action label="设自选" className="ml-9 w-[110px]">
          <path d="M62 25V15q0-9-9-9H14q-9 0-9 9v39q0 9 9 9h6" />
          <path d="M35 29h16l10 17-10 16H35L25 46z" strokeLinejoin="round" />
          <circle cx="43" cy="46" r="6" />
        </Action>
        <Action label="更多" className="ml-[40px] w-[110px]">
          <circle cx="34" cy="34" r="31" />
          <path d="M21 34h.1M34 34h.1M47 34h.1" strokeWidth="7" />
        </Action>
      </div>
    </footer>
  );
}

export default function App() {
  return (
    <div className="h-[2688px] w-[1216px] overflow-hidden bg-[#fefefe] font-['Noto_Sans_CJK_SC',sans-serif]">
      <StatusBar />
      <StockHeader />
      <Quote />
      <div className="h-[22px] bg-[#f4f4f4]" />
      <PeriodTabs />
      <IndicatorBar />
      <Charts />
      <Shortcuts />
      <div className="h-[26px] bg-[#f4f4f4]" />
      <InfoTabs />
      <BottomSheet />
    </div>
  );
}
